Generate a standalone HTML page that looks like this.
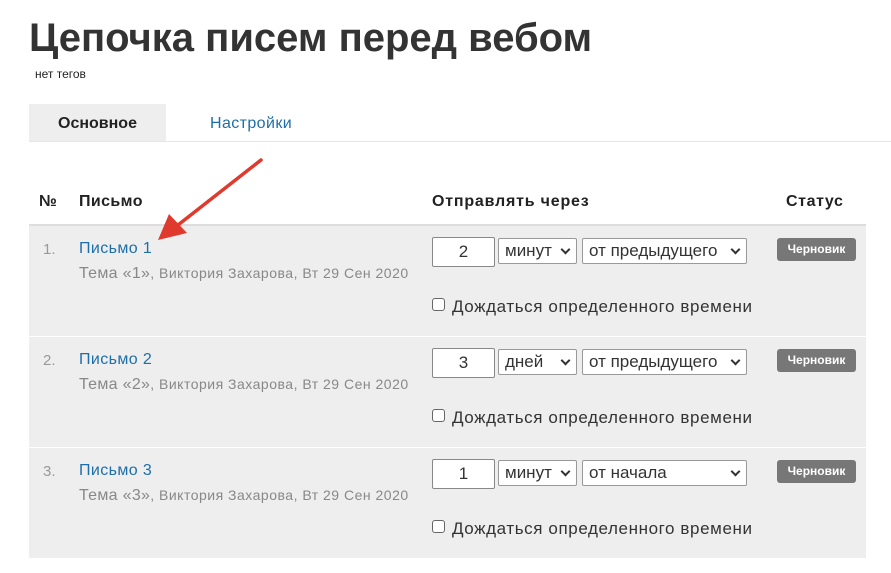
<html><head><style>
body{margin:0;width:891px;height:573px;background:#fff;font-family:"Liberation Sans",sans-serif;position:relative;overflow:hidden;color:#222}
.a{position:absolute;white-space:nowrap}
.row{position:absolute;left:29px;width:837px;height:110px;background:#eee}
.inp{position:absolute;background:#fff;border:1px solid #888;border-radius:2px;box-sizing:border-box;font-size:17px;color:#333}
.sel{position:absolute;background:#fff;border:1px solid #999;border-radius:2px;box-sizing:border-box;font-size:17px;color:#333;padding-left:6px;line-height:24px}
.sel:after{content:"";position:absolute;right:7px;top:7px;width:5px;height:5px;border-right:2px solid #333;border-bottom:2px solid #333;transform:rotate(45deg)}
.badge{position:absolute;left:777px;width:79px;height:23px;background:#777;color:#fff;font-weight:bold;font-size:12px;text-align:center;line-height:23px;border-radius:3px}
.cb{position:absolute;left:432px;width:13px;height:13px;border:1px solid #666;border-radius:3px;background:#fff;box-sizing:border-box}
.ct{left:452px;font-size:17px;color:#333;letter-spacing:0.6px}
.lk{left:79px;font-size:16px;color:#1d6fa8;letter-spacing:0.4px}
.sb{left:79px;font-size:16px;color:#888;letter-spacing:0.3px}
.sb span{font-size:14px;letter-spacing:0.5px}
</style></head><body>
<div class="a" style="left:29px;top:16px;font-size:40px;font-weight:bold;color:#333">Цепочка писем перед вебом</div>
<div class="a" style="left:35px;top:67px;font-size:12px">нет тегов</div>
<div class="a" style="left:29px;top:104px;width:137px;height:37px;background:#eee;font-size:16px;font-weight:bold;text-align:center;line-height:39px">Основное</div>
<div class="a" style="left:210px;top:105px;font-size:16px;line-height:38px;color:#1d6fa8;letter-spacing:0.4px">Настройки</div>
<div class="a" style="left:29px;top:141px;width:862px;height:1px;background:#e6e6e6"></div>
<div class="a" style="left:39px;top:193px;font-size:16px;font-weight:bold">№</div>
<div class="a" style="left:79px;top:193px;font-size:16px;font-weight:bold;letter-spacing:0.4px">Письмо</div>
<div class="a" style="left:432px;top:193px;font-size:16px;font-weight:bold;letter-spacing:0.8px">Отправлять через</div>
<div class="a" style="left:786px;top:193px;font-size:16px;font-weight:bold;letter-spacing:0.6px">Статус</div>
<div class="a" style="left:29px;top:224px;width:837px;height:2px;background:#ddd"></div>

<div class="row" style="top:226px"></div>
<div class="row" style="top:337px"></div>
<div class="row" style="top:448px"></div>

<div class="a" style="left:43px;top:241px;font-size:15px;color:#999">1.</div>
<div class="a lk" style="top:240px">Письмо 1</div>
<div class="a sb" style="top:265px">Тема «1»<span>, Виктория Захарова, Вт 29 Сен 2020</span></div>
<div class="inp" style="left:432px;top:237px;width:63px;height:30px;text-align:center;line-height:28px">2</div>
<div class="sel" style="left:498px;top:238px;width:79px;height:26px">минут</div>
<div class="sel" style="left:582px;top:238px;width:165px;height:26px">от предыдущего</div>
<div class="badge" style="top:238px">Черновик</div>
<div class="cb" style="top:298px"></div>
<div class="a ct" style="top:297px">Дождаться определенного времени</div>

<div class="a" style="left:43px;top:352px;font-size:15px;color:#999">2.</div>
<div class="a lk" style="top:351px">Письмо 2</div>
<div class="a sb" style="top:376px">Тема «2»<span>, Виктория Захарова, Вт 29 Сен 2020</span></div>
<div class="inp" style="left:432px;top:348px;width:63px;height:30px;text-align:center;line-height:28px">3</div>
<div class="sel" style="left:498px;top:349px;width:79px;height:26px">дней</div>
<div class="sel" style="left:582px;top:349px;width:165px;height:26px">от предыдущего</div>
<div class="badge" style="top:349px">Черновик</div>
<div class="cb" style="top:409px"></div>
<div class="a ct" style="top:408px">Дождаться определенного времени</div>

<div class="a" style="left:43px;top:463px;font-size:15px;color:#999">3.</div>
<div class="a lk" style="top:462px">Письмо 3</div>
<div class="a sb" style="top:487px">Тема «3»<span>, Виктория Захарова, Вт 29 Сен 2020</span></div>
<div class="inp" style="left:432px;top:459px;width:63px;height:30px;text-align:center;line-height:28px">1</div>
<div class="sel" style="left:498px;top:460px;width:79px;height:26px">минут</div>
<div class="sel" style="left:582px;top:460px;width:165px;height:26px">от начала</div>
<div class="badge" style="top:460px">Черновик</div>
<div class="cb" style="top:520px"></div>
<div class="a ct" style="top:519px">Дождаться определенного времени</div>

<svg class="a" style="left:0;top:0" width="891" height="573">
<line x1="261" y1="160" x2="178" y2="225" stroke="#e03a2f" stroke-width="3.5" stroke-linecap="round"/>
<polygon points="158,240 169,214 187,233" fill="#e03a2f"/>
</svg>
</body></html>
